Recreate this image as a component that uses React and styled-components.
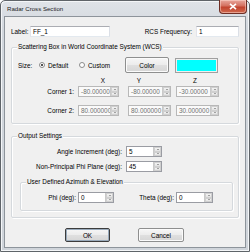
import React from "react";
import styled, { createGlobalStyle } from "styled-components";

const Global = createGlobalStyle`
  html, body { margin: 0; padding: 0; background: #ffffff; }
  body { width: 250px; height: 252px; overflow: hidden; font-family: "Liberation Sans", Arial, sans-serif; }
  * { box-sizing: border-box; }
`;

const Window = styled.div`
  width: 250px;
  height: 252px;
  border: 1px solid #5f6469;
  border-radius: 5px 5px 0 0;
  background: linear-gradient(#dfe3e8, #d2d7dd 30px, #cfd4da);
  padding: 0 3px 3px 3px;
  display: flex;
  flex-direction: column;
  box-shadow: inset 1px 1px 0 #f4f6f8, inset -1px -1px 0 #f4f6f8;
`;

const TitleBar = styled.div`
  height: 15px;
  position: relative;
  display: flex;
  align-items: center;
  padding-left: 3px;
  font-size: 6.1px;
  color: #1a1a1a;
`;

const CloseBtn = styled.div`
  position: absolute;
  right: -1px;
  top: -1px;
  width: 28px;
  height: 14px;
  border: 1px solid #6e2e25;
  border-top: none;
  border-radius: 0 0 4px 4px;
  background: linear-gradient(#e9a79d, #d3705f 45%, #c2432e 55%, #cf6a4f);
  display: flex;
  align-items: center;
  justify-content: center;
  box-shadow: inset 0 0 0 1px rgba(255, 220, 210, 0.5);
`;

const Client = styled.div`
  flex: 1;
  background: #f0f0f0;
  border: 1px solid #8d949b;
  padding: 9px 6px 0 6px;
  display: flex;
  flex-direction: column;
  font-size: 6.4px;
  color: #000;
`;

const Row = styled.div`
  display: flex;
  align-items: center;
  height: ${(p) => p.$h || 11}px;
  margin-top: ${(p) => p.$mt || 0}px;
  padding-left: ${(p) => p.$pl || 0}px;
`;

const Text = styled.span`
  white-space: nowrap;
  width: ${(p) => (p.$w ? `${p.$w}px` : "auto")};
  text-align: ${(p) => p.$align || "left"};
  margin-left: ${(p) => p.$ml || 0}px;
  margin-right: ${(p) => p.$mr || 0}px;
  color: ${(p) => (p.$dim ? "#6d6d6d" : "#000")};
  flex-shrink: 0;
`;

const TextBox = styled.div`
  width: ${(p) => p.$w}px;
  height: 11px;
  margin-left: ${(p) => p.$ml || 0}px;
  background: #fff;
  border: 1px solid #abadb3;
  border-right-color: #dbdfe6;
  border-bottom-color: #e3e9ef;
  border-left-color: #e2e3ea;
  display: flex;
  align-items: center;
  padding-left: 2px;
  flex-shrink: 0;
`;

const SpinBox = styled.div`
  width: ${(p) => p.$w}px;
  height: 11px;
  margin-left: ${(p) => p.$ml || 0}px;
  background: ${(p) => (p.$disabled ? "#fafafa" : "#fff")};
  border: 1px solid ${(p) => (p.$disabled ? "#b8b8b8" : "#9a9ca3")};
  display: flex;
  align-items: stretch;
  flex-shrink: 0;
  color: ${(p) => (p.$disabled ? "#707070" : "#000")};
`;

const SpinText = styled.div`
  flex: 1;
  overflow: hidden;
  white-space: nowrap;
  padding-left: 2px;
  display: flex;
  align-items: center;
`;

const Spinner = styled.div`
  width: 8px;
  display: flex;
  flex-direction: column;
  border-left: 1px solid #c9c9c9;
`;

const SpinHalf = styled.div`
  flex: 1;
  background: linear-gradient(#f4f4f4, #e2e2e2);
  border: 1px solid #d0d0d0;
  display: flex;
  align-items: center;
  justify-content: center;
  &::after {
    content: "";
    border-left: 1.5px solid transparent;
    border-right: 1.5px solid transparent;
    ${(p) =>
      p.$up
        ? "border-bottom: 1.5px solid #555;"
        : "border-top: 1.5px solid #555;"}
  }
`;

const Group = styled.div`
  position: relative;
  border: 1px solid #d5d9dd;
  box-shadow: 1px 1px 0 #ffffff, inset 1px 1px 0 #ffffff;
  border-radius: 2px;
  height: ${(p) => p.$h}px;
  margin-top: ${(p) => p.$mt || 0}px;
  margin-left: ${(p) => p.$ml || 0}px;
  margin-right: ${(p) => p.$mr || 0}px;
  padding-top: ${(p) => p.$pt || 0}px;
  display: flex;
  flex-direction: column;
`;

const Legend = styled.span`
  position: absolute;
  top: -5px;
  left: 5px;
  padding: 0 1px;
  background: #f0f0f0;
  white-space: nowrap;
`;

const Button = styled.div`
  width: ${(p) => p.$w}px;
  height: ${(p) => p.$h || 14}px;
  margin-left: ${(p) => p.$ml || 0}px;
  border: 1px solid ${(p) => (p.$default ? "#3c3c3c" : "#8e8f8f")};
  border-radius: 2px;
  background: linear-gradient(#f6f6f6, #ececec 48%, #dfdfdf 52%, #d6d6d6);
  box-shadow: inset 0 0 0 1px ${(p) => (p.$default ? "#9ab" : "#fbfbfb")};
  display: flex;
  align-items: center;
  justify-content: center;
  flex-shrink: 0;
`;

const Swatch = styled.div`
  width: 43px;
  height: 15px;
  margin-left: 6px;
  background: #00ffff;
  border: 1px solid #a0a0a0;
  box-shadow: inset 0 0 0 1px #f0f0f0;
  flex-shrink: 0;
`;

const Radio = styled.span`
  width: 6px;
  height: 6px;
  border-radius: 50%;
  border: 1px solid #8c8c8c;
  background: #fff;
  margin-left: ${(p) => p.$ml || 0}px;
  margin-right: 3px;
  position: relative;
  flex-shrink: 0;
  &::after {
    content: "";
    display: ${(p) => (p.$on ? "block" : "none")};
    position: absolute;
    left: 1px;
    top: 1px;
    width: 2px;
    height: 2px;
    border-radius: 50%;
    background: #1a1a1a;
  }
`;

const Spacer = styled.div`
  flex: 1;
`;

function Spin({ w, ml, value, disabled }) {
  return (
    <SpinBox $w={w} $ml={ml} $disabled={disabled}>
      <SpinText>{value}</SpinText>
      <Spinner>
        <SpinHalf $up />
        <SpinHalf />
      </Spinner>
    </SpinBox>
  );
}

export default function App() {
  return (
    <>
      <Global />
      <Window>
        <TitleBar>
          Radar Cross Section
          <CloseBtn>
            <svg width="8" height="7" viewBox="0 0 8 7">
              <path d="M1 0.8 L7 6.2 M7 0.8 L1 6.2" stroke="#fff" strokeWidth="1.6" />
            </svg>
          </CloseBtn>
        </TitleBar>
        <Client>
          <Row>
            <Text $w={19}>Label:</Text>
            <TextBox $w={80}>FF_1</TextBox>
            <Spacer />
            <Text $mr={4}>RCS Frequency:</Text>
            <TextBox $w={43}>1</TextBox>
          </Row>

          <Group $h={77} $mt={10} $pt={9}>
            <Legend>Scattering Box in World Coordinate System (WCS)</Legend>
            <Row $h={16} $pl={6}>
              <Text $w={21}>Size:</Text>
              <Radio $on />
              <Text $w={31}>Default</Text>
              <Radio />
              <Text $w={37}>Custom</Text>
              <Button $w={44} $h={16}>Color</Button>
              <Swatch />
            </Row>
            <Row $h={8} $mt={3}>
              <Text $w={93} $align="right">X</Text>
              <Text $w={36} $align="right">Y</Text>
              <Text $w={56} $align="right">Z</Text>
            </Row>
            <Row $mt={2}>
              <Text $w={62} $align="right">Corner 1:</Text>
              <Spin w={41} ml={4} value="-80.00000" disabled />
              <Spin w={43} ml={9} value="-80.00000" disabled />
              <Spin w={43} ml={5} value="-30.00000" disabled />
            </Row>
            <Row $mt={8}>
              <Text $w={62} $align="right">Corner 2:</Text>
              <Spin w={41} ml={4} value="80.000000" disabled />
              <Spin w={43} ml={9} value="80.000000" disabled />
              <Spin w={43} ml={5} value="30.000000" disabled />
            </Row>
          </Group>

          <Group $h={82} $mt={12} $pt={9}>
            <Legend>Output Settings</Legend>
            <Row>
              <Text $w={110} $align="right">Angle Increment (deg):</Text>
              <Spin w={36} ml={4} value="5" />
            </Row>
            <Row $mt={4}>
              <Text $w={110} $align="right">Non-Principal Phi Plane (deg):</Text>
              <Spin w={36} ml={4} value="45" />
            </Row>
            <Group $h={29} $mt={10} $ml={8} $mr={5} $pt={9}>
              <Legend>User Defined Azimuth &amp; Elevation</Legend>
              <Row>
                <Text $w={55} $align="right">Phi (deg):</Text>
                <Spin w={36} ml={2} value="0" />
                <Text $w={60} $align="right">Theta (deg):</Text>
                <Spin w={37} ml={2} value="0" />
              </Row>
            </Group>
          </Group>

          <Row $h={14} $mt={10}>
            <Button $w={45} $ml={54} $default>OK</Button>
            <Button $w={46} $ml={28}>Cancel</Button>
          </Row>
        </Client>
      </Window>
    </>
  );
}
